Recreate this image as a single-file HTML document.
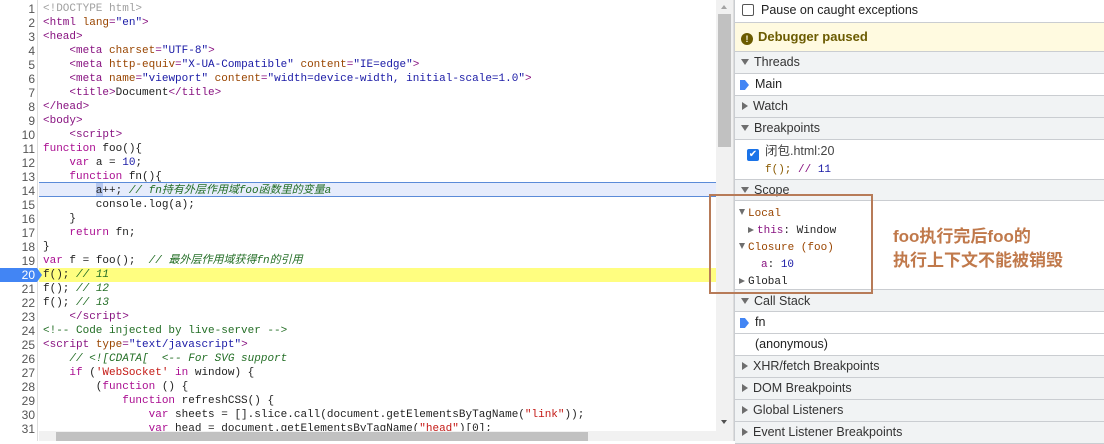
<!DOCTYPE html>
<html><head><meta charset="utf-8"><style>
*{margin:0;padding:0;box-sizing:border-box}
body{width:1104px;height:441px;overflow:hidden;background:#fff;position:relative;font-family:"Liberation Sans","Noto Sans CJK SC",sans-serif}
.code{position:absolute;left:0;top:0;width:716px;height:441px;overflow:hidden;font-family:"Liberation Mono","Noto Sans CJK SC",monospace;font-size:11px}
.gut{position:absolute;left:0;top:0;width:38px;height:441px;border-right:1px solid #ddd;background:#fff}
.ln{position:absolute;left:0;width:37px;text-align:right;padding-right:2px;color:#555;height:14px;line-height:14px;font-size:12px;font-family:"Liberation Sans",sans-serif}
.l{position:absolute;left:43px;height:14px;line-height:14px;white-space:pre;color:#222}
.t{color:#881280}.an{color:#994500}.av{color:#1a1aa6}.k{color:#aa0d91}.c{color:#236e25;font-style:italic}.g{color:#a0a0a0}
.panel{position:absolute;left:734px;top:0;width:370px;height:441px;border-left:1px solid #cacdd1;font-size:12.5px;color:#222}
.r{position:absolute;left:0;width:370px;border-bottom:1px solid #cacdd1}
.h{background:#f1f3f4;color:#333}
.tri{display:inline-block;width:0;height:0;border-left:4px solid transparent;border-right:4px solid transparent;border-top:6px solid #6e6e6e;margin-right:5px;vertical-align:1px}
.trr{display:inline-block;width:0;height:0;border-top:4px solid transparent;border-bottom:4px solid transparent;border-left:6px solid #6e6e6e;margin-right:5px;vertical-align:0px}
.arr{position:absolute;left:5px;width:9px;height:10px;background:#4285f4;clip-path:polygon(0 0,55% 0,100% 50%,55% 100%,0 100%)}
.mono{font-family:"Liberation Mono",monospace;font-size:11px}
</style></head><body>
<div class="code">
<div class="gut"></div>
<div style="position:absolute;left:39px;top:182px;width:677px;height:15px;background:#e6ecfc;border-top:1px solid #5b8bd8;border-bottom:1px solid #5b8bd8"></div>
<div style="position:absolute;left:96px;top:183px;width:7px;height:13px;background:#b7c8ee"></div>
<div style="position:absolute;left:39px;top:268px;width:677px;height:14px;background:#fffe80"></div>
<div style="position:absolute;left:0;top:268px;width:42px;height:14px;background:#4285f4;clip-path:polygon(0 0,37px 0,42px 50%,37px 100%,0 100%)"></div>
<div class="ln" style="top:2px">1</div><div class="ln" style="top:16px">2</div><div class="ln" style="top:30px">3</div><div class="ln" style="top:44px">4</div><div class="ln" style="top:58px">5</div><div class="ln" style="top:72px">6</div><div class="ln" style="top:86px">7</div><div class="ln" style="top:100px">8</div><div class="ln" style="top:114px">9</div><div class="ln" style="top:128px">10</div><div class="ln" style="top:142px">11</div><div class="ln" style="top:156px">12</div><div class="ln" style="top:170px">13</div><div class="ln" style="top:184px">14</div><div class="ln" style="top:198px">15</div><div class="ln" style="top:212px">16</div><div class="ln" style="top:226px">17</div><div class="ln" style="top:240px">18</div><div class="ln" style="top:254px">19</div><div class="ln" style="top:268px;color:#fff">20</div><div class="ln" style="top:282px">21</div><div class="ln" style="top:296px">22</div><div class="ln" style="top:310px">23</div><div class="ln" style="top:324px">24</div><div class="ln" style="top:338px">25</div><div class="ln" style="top:352px">26</div><div class="ln" style="top:366px">27</div><div class="ln" style="top:380px">28</div><div class="ln" style="top:394px">29</div><div class="ln" style="top:408px">30</div><div class="ln" style="top:422px">31</div>
<div class="l g" style="top:2px">&lt;!DOCTYPE html&gt;</div>
<div class="l" style="top:16px"><span class="t">&lt;html</span> <span class="an">lang</span><span class="t">=</span><span class="av">"en"</span><span class="t">&gt;</span></div>
<div class="l t" style="top:30px">&lt;head&gt;</div>
<div class="l" style="top:44px">    <span class="t">&lt;meta</span> <span class="an">charset</span><span class="t">=</span><span class="av">"UTF-8"</span><span class="t">&gt;</span></div>
<div class="l" style="top:58px">    <span class="t">&lt;meta</span> <span class="an">http-equiv</span><span class="t">=</span><span class="av">"X-UA-Compatible"</span> <span class="an">content</span><span class="t">=</span><span class="av">"IE=edge"</span><span class="t">&gt;</span></div>
<div class="l" style="top:72px">    <span class="t">&lt;meta</span> <span class="an">name</span><span class="t">=</span><span class="av">"viewport"</span> <span class="an">content</span><span class="t">=</span><span class="av">"width=device-width, initial-scale=1.0"</span><span class="t">&gt;</span></div>
<div class="l" style="top:86px">    <span class="t">&lt;title&gt;</span>Document<span class="t">&lt;/title&gt;</span></div>
<div class="l t" style="top:100px">&lt;/head&gt;</div>
<div class="l t" style="top:114px">&lt;body&gt;</div>
<div class="l t" style="top:128px">    &lt;script&gt;</div>
<div class="l" style="top:142px"><span class="k">function</span> foo(){</div>
<div class="l" style="top:156px">    <span class="k">var</span> a = <span class="av">10</span>;</div>
<div class="l" style="top:170px">    <span class="k">function</span> fn(){</div>
<div class="l" style="top:184px">        a++; <span class="c">// fn持有外层作用域foo函数里的变量a</span></div>
<div class="l" style="top:198px">        console.log(a);</div>
<div class="l" style="top:212px">    }</div>
<div class="l" style="top:226px">    <span class="k">return</span> fn;</div>
<div class="l" style="top:240px">}</div>
<div class="l" style="top:254px"><span class="k">var</span> f = foo();  <span class="c">// 最外层作用域获得fn的引用</span></div>
<div class="l" style="top:268px">f(); <span class="c">// 11</span></div>
<div class="l" style="top:282px">f(); <span class="c">// 12</span></div>
<div class="l" style="top:296px">f(); <span class="c">// 13</span></div>
<div class="l t" style="top:310px">    &lt;/script&gt;</div>
<div class="l c" style="top:324px;font-style:normal">&lt;!-- Code injected by live-server --&gt;</div>
<div class="l" style="top:338px"><span class="t">&lt;script</span> <span class="an">type</span><span class="t">=</span><span class="av">"text/javascript"</span><span class="t">&gt;</span></div>
<div class="l" style="top:352px">    <span class="c">// &lt;![CDATA[  &lt;-- For SVG support</span></div>
<div class="l" style="top:366px">    <span class="k">if</span> (<span style="color:#c41a16">'WebSocket'</span> <span class="k">in</span> window) {</div>
<div class="l" style="top:380px">        (<span class="k">function</span> () {</div>
<div class="l" style="top:394px">            <span class="k">function</span> refreshCSS() {</div>
<div class="l" style="top:408px">                <span class="k">var</span> sheets = [].slice.call(document.getElementsByTagName(<span style="color:#c41a16">"link"</span>));</div>
<div class="l" style="top:422px">                <span class="k">var</span> head = document.getElementsByTagName(<span style="color:#c41a16">"head"</span>)[0];</div>
<div style="position:absolute;left:39px;top:431px;width:677px;height:10px;background:#f1f1f1"></div>
<div style="position:absolute;left:56px;top:432px;width:532px;height:9px;background:#c1c1c1"></div>
</div>
<div style="position:absolute;left:716px;top:0;width:18px;height:441px;background:#f1f1f1;border-right:1px solid #ddd"></div>
<div style="position:absolute;left:718px;top:14px;width:13px;height:133px;background:#c1c1c1"></div>
<div style="position:absolute;left:721px;top:5px;border-left:3.5px solid transparent;border-right:3.5px solid transparent;border-bottom:4px solid #a3a3a3"></div>
<div style="position:absolute;left:721px;top:420px;border-left:3.5px solid transparent;border-right:3.5px solid transparent;border-top:4px solid #505050"></div>
<div class="panel">
<div class="r" style="top:0;height:23px;line-height:21px;padding-left:7px"><span style="display:inline-block;width:12px;height:12px;border:1px solid #555;border-radius:2px;vertical-align:-2px;margin-right:7px"></span>Pause on caught exceptions</div>
<div class="r" style="top:23px;height:29px;line-height:28px;background:#fffae0;color:#6b5b00;font-weight:bold;font-size:13px;padding-left:6px"><span style="display:inline-block;width:12px;height:12px;border-radius:50%;background:#6b5b00;color:#fffae0;font-size:9px;line-height:12px;text-align:center;vertical-align:-1px;margin-right:5px">!</span>Debugger paused</div>
<div class="r h" style="top:52px;height:22px;line-height:21px;padding-left:6px"><span class="tri"></span>Threads</div>
<div class="r" style="top:74px;height:22px;line-height:21px;padding-left:20px"><span class="arr" style="top:6px"></span>Main</div>
<div class="r h" style="top:96px;height:22px;line-height:21px;padding-left:7px"><span class="trr"></span>Watch</div>
<div class="r h" style="top:118px;height:22px;line-height:21px;padding-left:6px"><span class="tri"></span>Breakpoints</div>
<div class="r" style="top:140px;height:40px;padding-left:12px;padding-top:4px;line-height:15px"><span style="display:inline-block;width:12px;height:12px;background:#1a73e8;border-radius:2px;vertical-align:-2px;margin-right:6px;color:#fff;font-size:10px;line-height:12px;text-align:center">✔</span><span style="color:#444">闭包.html:20</span><br><span class="mono" style="margin-left:18px"><span style="color:#8a5a00">f();</span> <span style="color:#881280">//</span> <span style="color:#1a1aa6">11</span></span></div>
<div class="r h" style="top:180px;height:21px;line-height:20px;padding-left:6px"><span class="tri"></span>Scope</div>
<div style="position:absolute;left:4px;top:206px;font-family:'Liberation Mono',monospace;font-size:11px;line-height:17px">
<div><span class="tri" style="border-width:6px 3.5px 0;margin-right:3px"></span><span style="color:#994500">Local</span></div>
<div style="padding-left:9px"><span class="trr" style="border-width:3.5px 0 3.5px 6px;margin-right:3px"></span><span style="color:#881280">this</span>: Window</div>
<div><span class="tri" style="border-width:6px 3.5px 0;margin-right:3px"></span><span style="color:#994500">Closure (foo)</span></div>
<div style="padding-left:22px"><span style="color:#881280">a</span>: <span style="color:#1a1aa6">10</span></div>
<div><span class="trr" style="border-width:3.5px 0 3.5px 6px;margin-right:3px"></span>Global</div>
</div>
<div class="r h" style="top:289px;height:23px;line-height:22px;padding-left:6px;border-top:1px solid #cacdd1"><span class="tri"></span>Call Stack</div>
<div class="r" style="top:312px;height:22px;line-height:21px;padding-left:20px"><span class="arr" style="top:6px"></span>fn</div>
<div class="r" style="top:334px;height:22px;line-height:21px;padding-left:20px">(anonymous)</div>
<div class="r h" style="top:356px;height:22px;line-height:21px;padding-left:7px"><span class="trr"></span>XHR/fetch Breakpoints</div>
<div class="r h" style="top:378px;height:22px;line-height:21px;padding-left:7px"><span class="trr"></span>DOM Breakpoints</div>
<div class="r h" style="top:400px;height:22px;line-height:21px;padding-left:7px"><span class="trr"></span>Global Listeners</div>
<div class="r h" style="top:422px;height:22px;line-height:21px;padding-left:7px"><span class="trr"></span>Event Listener Breakpoints</div>
</div>
<div style="position:absolute;left:709px;top:194px;width:164px;height:100px;border:2px solid #b77b58"></div>
<div style="position:absolute;left:893px;top:225px;color:#c0794b;font-weight:bold;font-size:17px;line-height:24px;font-family:'Liberation Sans','Noto Sans CJK SC',sans-serif">foo执行完后foo的<br>执行上下文不能被销毁</div>
</body></html>
